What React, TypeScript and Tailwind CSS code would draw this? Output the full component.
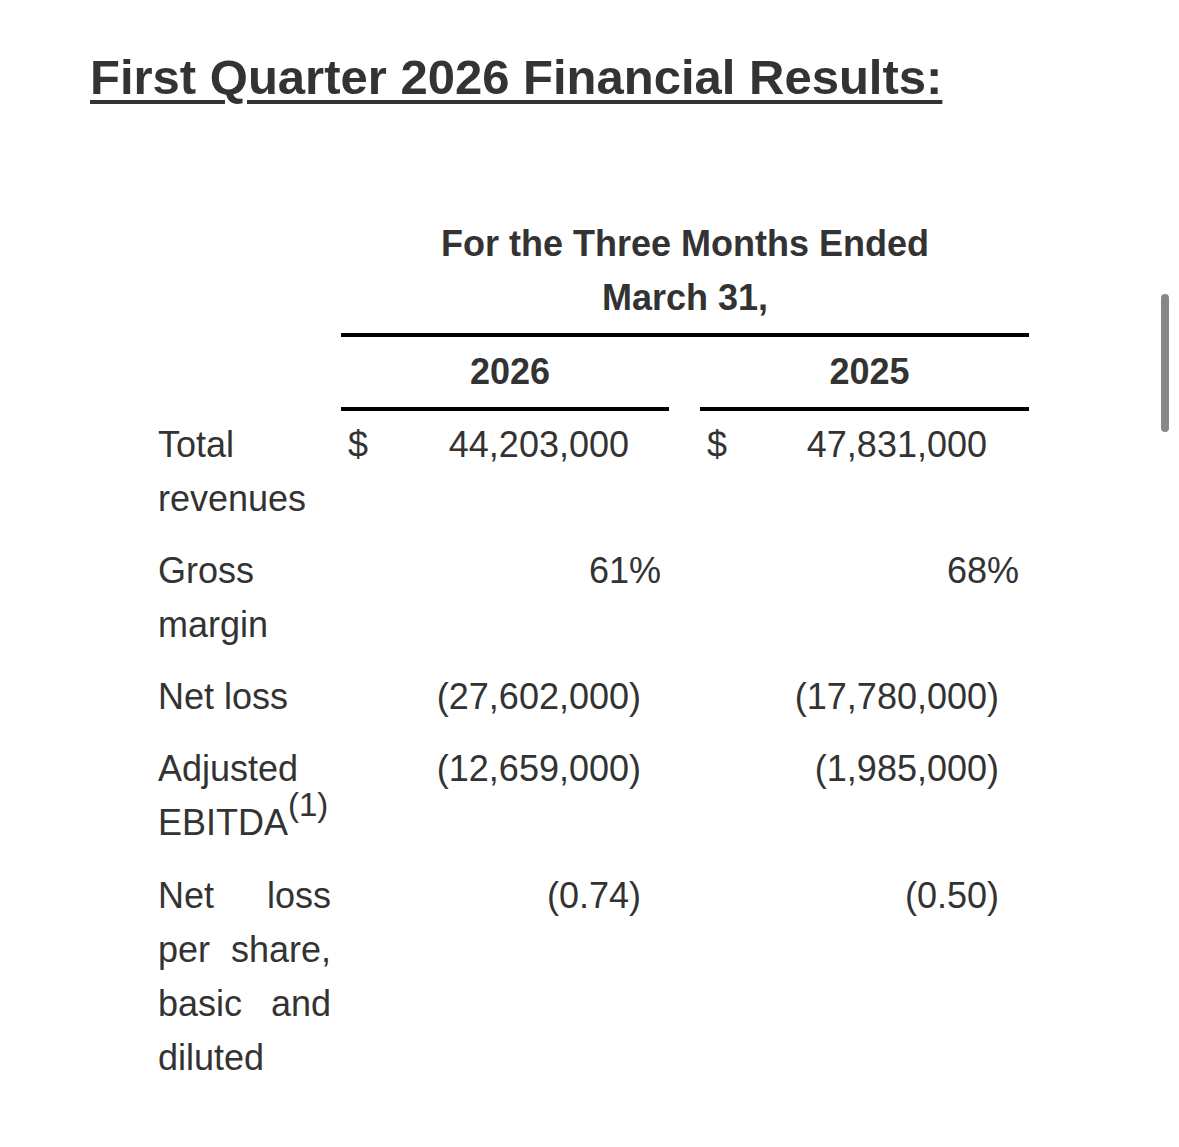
import React from "react";

type Row = {
  label: React.ReactNode;
  dollar?: boolean;
  cur: string;
  curSuffix?: string;
  prev: string;
  prevSuffix?: string;
};

const rows: Row[] = [
  { label: "Total revenues", dollar: true, cur: "44,203,000", prev: "47,831,000" },
  { label: "Gross margin", cur: "61", curSuffix: "%", prev: "68", prevSuffix: "%" },
  { label: "Net loss", cur: "(27,602,000", curSuffix: ")", prev: "(17,780,000", prevSuffix: ")" },
  {
    label: (
      <>
        Adjusted EBITDA
        <span className="relative -top-[19px] text-[33px]">(1)</span>
      </>
    ),
    cur: "(12,659,000",
    curSuffix: ")",
    prev: "(1,985,000",
    prevSuffix: ")",
  },
  {
    label: "Net loss per share, basic and diluted",
    cur: "(0.74",
    curSuffix: ")",
    prev: "(0.50",
    prevSuffix: ")",
  },
];

function ValueCell({
  dollar,
  value,
  suffix,
  suffixWidth,
}: {
  dollar?: boolean;
  value: string;
  suffix?: string;
  suffixWidth: string;
}) {
  return (
    <div className="flex pt-[7px] pb-[11px]">
      <span className="w-[40px] pl-[7px]">{dollar ? "$" : ""}</span>
      <span className="flex-1 text-right">{value}</span>
      <span className={suffixWidth}>{suffix}</span>
    </div>
  );
}

export default function App() {
  return (
    <div
      className="relative min-h-screen bg-white px-[90px] pt-[48px] text-[#333333]"
      style={{ fontFamily: '"Liberation Sans", Arial, sans-serif' }}
    >
      <h1 className="text-[49px] leading-[58px] font-bold underline decoration-[4px] underline-offset-[6px]">
        First Quarter 2026 Financial Results:
      </h1>

      <div className="mt-[111px] ml-[68px] grid grid-cols-[183px_328px_31px_329px] text-[36px] leading-[54px]">
        {/* header */}
        <div />
        <div className="col-span-3 border-b-4 border-black pb-[8px] text-center font-bold">
          For the Three Months Ended
          <br />
          March 31,
        </div>

        <div />
        <div className="border-b-4 border-black pt-[8px] pb-[8px] pl-[10px] text-center font-bold">
          2026
        </div>
        <div />
        <div className="border-b-4 border-black pt-[8px] pb-[8px] pl-[10px] text-center font-bold">
          2025
        </div>

        {rows.map((r, i) => (
          <React.Fragment key={i}>
            <div className="pt-[7px] pb-[11px] pr-[10px] text-justify">{r.label}</div>
            <ValueCell dollar={r.dollar} value={r.cur} suffix={r.curSuffix} suffixWidth="w-[40px]" />
            <div />
            <ValueCell dollar={r.dollar} value={r.prev} suffix={r.prevSuffix} suffixWidth="w-[42px]" />
          </React.Fragment>
        ))}
      </div>

      {/* scroll indicator */}
      <div className="absolute top-[294px] left-[1161px] h-[138px] w-[8px] rounded-full bg-[#888888]" />
    </div>
  );
}
